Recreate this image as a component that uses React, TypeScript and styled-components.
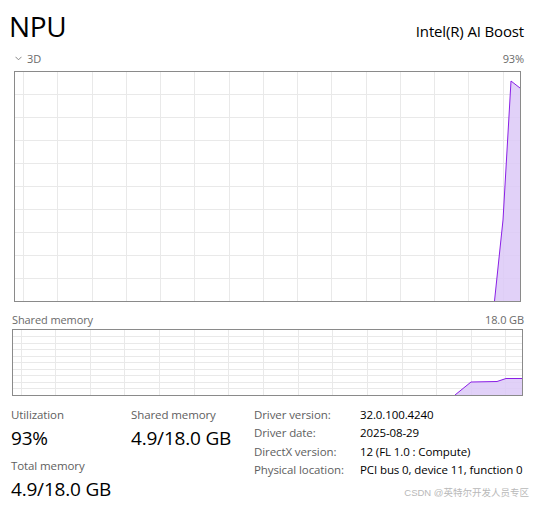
import React from "react";
import styled, { createGlobalStyle } from "styled-components";

const Global = createGlobalStyle`
  html, body { margin: 0; padding: 0; background: #ffffff; }
  body { font-family: "Open Sans", "Noto Sans", "Liberation Sans", sans-serif; color: #000; }
`;

const Page = styled.div`
  width: 534px;
  height: 505px;
  box-sizing: border-box;
  padding: 7px 10px 0 9px;
  position: relative;
  overflow: hidden;
`;

const Header = styled.div`
  display: flex;
  justify-content: space-between;
  align-items: baseline;
  height: 38px;
`;

const Title = styled.h1`
  margin: 0;
  font-size: 28px;
  font-weight: 400;
  line-height: 38px;
  letter-spacing: -0.3px;
`;

const Device = styled.div`
  font-size: 15px;
  line-height: 20px;
  letter-spacing: -0.15px;
`;

const ChartHead = styled.div<{ $inset: number; $mt: number }>`
  display: flex;
  justify-content: space-between;
  align-items: center;
  margin-top: ${(p) => p.$mt}px;
  padding-left: ${(p) => p.$inset}px;
  height: 18px;
  font-size: 11px;
  color: #6a6a6a;
  letter-spacing: -0.1px;
`;

const Engine = styled.span`
  display: flex;
  align-items: center;
  gap: 5px;
`;

const ChartBox = styled.div<{ $left: number; $mt: number; $w: number; $h: number }>`
  margin-left: ${(p) => p.$left}px;
  margin-top: ${(p) => p.$mt}px;
  width: ${(p) => p.$w}px;
  height: ${(p) => p.$h}px;
  box-sizing: border-box;
  border: 1px solid #8a8a8a;
  svg { display: block; width: 100%; height: 100%; }
`;

const Stats = styled.div`
  display: grid;
  grid-template-columns: 120px 123px 1fr;
  align-items: start;
  margin-top: 10px;
  margin-left: 2px;
`;

const StatCol = styled.div`
  display: flex;
  flex-direction: column;
`;

const StatLabel = styled.div`
  font-size: 11.5px;
  color: #5e5e5e;
  line-height: 18px;
  letter-spacing: -0.1px;
`;

const StatValue = styled.div`
  font-size: 19px;
  line-height: 28px;
  margin-bottom: 4.5px;
  letter-spacing: -0.2px;
`;

const Details = styled.div`
  display: grid;
  grid-template-columns: 106px auto;
  align-content: start;
  font-size: 11.5px;
  line-height: 18.3px;
  letter-spacing: -0.1px;
`;

const DLabel = styled.div`
  color: #5e5e5e;
`;

const DValue = styled.div`
  color: #000;
`;

const Watermark = styled.div`
  position: absolute;
  right: 5px;
  bottom: 6px;
  font-family: "Liberation Sans", "Noto Sans CJK SC", sans-serif;
  font-size: 9.5px;
  color: #b9b9b9;
`;

const GRID = "#e9e9e9";
const STROKE = "#8a1fe6";
const FILL = "#dcc9f7";

function Grid({ w, h, x0, dx, rows }: { w: number; h: number; x0: number; dx: number; rows: number }) {
  const vs: number[] = [];
  for (let x = x0; x < w; x += dx) vs.push(x);
  const hs: number[] = [];
  for (let j = 1; j < rows; j++) hs.push((h / rows) * j);
  return (
    <g stroke={GRID} strokeWidth={1} shapeRendering="crispEdges">
      {vs.map((x) => (
        <line key={"v" + x} x1={x} x2={x} y1={0} y2={h} />
      ))}
      {hs.map((y) => (
        <line key={"h" + y} x1={0} x2={w} y1={y} y2={y} />
      ))}
    </g>
  );
}

function Area({ pts, w, h }: { pts: [number, number][]; w: number; h: number }) {
  const line = pts.map((p, i) => `${i ? "L" : "M"}${p[0]} ${p[1]}`).join(" ");
  const area = `${line} L${w} ${h} L${pts[0][0]} ${h} Z`;
  return (
    <g>
      <path d={area} fill={FILL} fillOpacity={0.85} />
      <path d={line} fill="none" stroke={STROKE} strokeWidth={1} />
    </g>
  );
}

function Chevron() {
  return (
    <svg width="7" height="5" viewBox="0 0 7 5">
      <path d="M0.5 0.8 L3.5 3.8 L6.5 0.8" fill="none" stroke="#7a7a7a" strokeWidth="0.9" />
    </svg>
  );
}

export default function App() {
  const mainW = 505;
  const mainH = 229;
  const shW = 509;
  const shH = 65;
  return (
    <>
      <Global />
      <Page>
        <Header>
          <Title>NPU</Title>
          <Device>Intel(R) AI Boost</Device>
        </Header>
        <ChartHead $inset={6} $mt={4}>
          <Engine>
            <Chevron />
            3D
          </Engine>
          <span>93%</span>
        </ChartHead>
        <ChartBox $left={5} $mt={4} $w={507} $h={231}>
          <svg viewBox={`0 0 ${mainW} ${mainH}`} preserveAspectRatio="none">
            <Grid w={mainW} h={mainH} x0={8.5} dx={34.25} rows={10} />
            <Area
              w={mainW}
              h={mainH}
              pts={[
                [479.5, 229],
                [488, 148],
                [496, 9],
                [505, 16],
              ]}
            />
          </svg>
        </ChartBox>
        <ChartHead $inset={3} $mt={8}>
          <span>Shared memory</span>
          <span>18.0 GB</span>
        </ChartHead>
        <ChartBox $left={3} $mt={1} $w={511} $h={67}>
          <svg viewBox={`0 0 ${shW} ${shH}`} preserveAspectRatio="none">
            <Grid w={shW} h={shH} x0={8} dx={34.64} rows={10} />
            <Area
              w={shW}
              h={shH}
              pts={[
                [442, 65],
                [458, 52],
                [484, 51.5],
                [493, 48.5],
                [509, 48.5],
              ]}
            />
          </svg>
        </ChartBox>
        <Stats>
          <StatCol>
            <StatLabel>Utilization</StatLabel>
            <StatValue>93%</StatValue>
            <StatLabel>Total memory</StatLabel>
            <StatValue>4.9/18.0 GB</StatValue>
          </StatCol>
          <StatCol>
            <StatLabel>Shared memory</StatLabel>
            <StatValue>4.9/18.0 GB</StatValue>
          </StatCol>
          <Details>
            <DLabel>Driver version:</DLabel>
            <DValue>32.0.100.4240</DValue>
            <DLabel>Driver date:</DLabel>
            <DValue>2025-08-29</DValue>
            <DLabel>DirectX version:</DLabel>
            <DValue>12 (FL 1.0 : Compute)</DValue>
            <DLabel>Physical location:</DLabel>
            <DValue>PCI bus 0, device 11, function 0</DValue>
          </Details>
        </Stats>
        <Watermark>CSDN @英特尔开发人员专区</Watermark>
      </Page>
    </>
  );
}
